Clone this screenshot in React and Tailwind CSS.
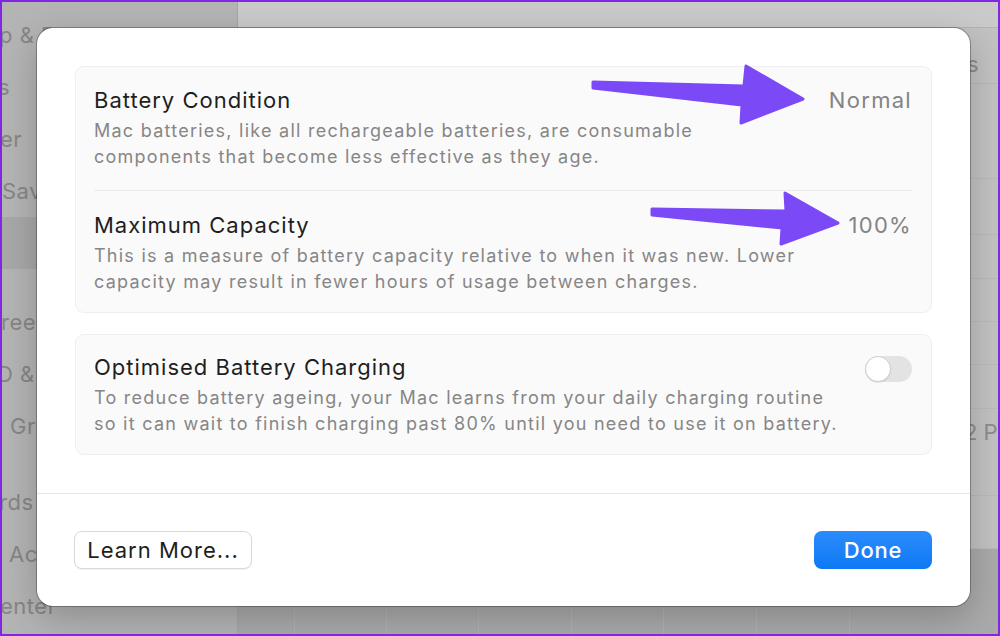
const font = { fontFamily: 'Inter, "Noto Sans", "Liberation Sans", sans-serif' }

const sidebarGroups = [
  [
    { text: 'p & D', ml: '-3px' },
    { text: 's', ml: '-4px' },
    { text: 'er', ml: '-2px' },
    { text: 'Sav', ml: '0px' },
    { text: 'Battery', ml: '40px', active: true },
  ],
  [
    { text: 'ree', ml: '-1px' },
    { text: 'D &', ml: '-5px' },
    { text: 'Gr', ml: '8px' },
  ],
  [
    { text: 'rds', ml: '-3px' },
    { text: 'Ac', ml: '7px' },
    { text: 'enter', ml: '-2px' },
  ],
]

const bars = [
  { left: 122, top: 14, h: 8 },
  { left: 153, top: -8, h: 30 },
  { left: 215, top: 16, h: 6 },
  { left: 309, top: 5, h: 17 },
]

function Sidebar() {
  return (
    <div className="w-[236px] shrink-0 h-full bg-[#b4b4b4] border-r border-[#a6a6a6] overflow-hidden">
      <div className="pt-[7px]">
        {sidebarGroups.map((group, gi) => (
          <div key={gi} className={gi === 0 ? '' : gi === 1 ? 'mt-[27px]' : 'mt-[24px]'}>
            {group.map((item) => (
              <div
                key={item.text}
                className={`h-[52px] flex items-center text-[22px] tracking-[0.5px] whitespace-nowrap text-[#868686] ${
                  item.active ? 'bg-[#a8a8a8] mr-[22px]' : ''
                }`}
              >
                <span style={{ marginLeft: item.ml }}>{item.text}</span>
              </div>
            ))}
          </div>
        ))}
      </div>
    </div>
  )
}

function MainBehind() {
  return (
    <div className="flex-1 min-w-0 h-full flex flex-col bg-[#c2c2c2]">
      <div className="h-[26px] bg-[#cacaca] border-b border-[#b3b3b3]" />
      <div className="flex-1 flex flex-col">
        <div className="h-[56px] border-b border-[#b9b9b9] flex items-end pl-[729px] pb-[2px] text-[22px] text-[#8d8d8d]">
          s
        </div>
        <div className="h-[95px] border-b border-[#b9b9b9]" />
        <div className="h-[56px] border-b border-[#b9b9b9]" />
        <div className="h-[44px] border-b border-[#b9b9b9]" />
        <div className="h-[43px] border-b border-[#bababa]" />
        <div className="h-[43px] border-b border-[#bababa]" />
        <div className="h-[44px] border-b border-[#bababa]" />
        <div className="h-[44px] flex items-end text-[22px] text-[#8d8d8d] whitespace-nowrap pl-[717px] pb-[4px]">
          12 PM
        </div>
        <div className="h-[43px] border-b border-[#bababa]" />
        <div className="h-[53px] border-b border-[#bababa]" />
        <div className="flex-1 bg-[#aaaaaa] relative">
          <div className="h-full flex">
            <div className="w-[57px] border-r border-[#b2b2b2]" />
            <div className="w-[92px] border-r border-[#b2b2b2]" />
            <div className="w-[92px] border-r border-[#b2b2b2]" />
            <div className="w-[93px] border-r border-[#b2b2b2]" />
            <div className="w-[92px] border-r border-[#b2b2b2]" />
            <div className="w-[93px] border-r border-[#b2b2b2]" />
            <div className="w-[93px] border-r border-[#b2b2b2]" />
          </div>
          {bars.map((b, i) => (
            <div
              key={i}
              className="absolute w-[20px] rounded-t-[4px] bg-[#6b8cc6]"
              style={{ left: b.left, top: b.top, height: b.h }}
            />
          ))}
        </div>
      </div>
    </div>
  )
}

function Toggle() {
  return (
    <div className="relative w-[47px] h-[26px] rounded-full bg-[#e3e3e3] shrink-0">
      <div className="absolute left-0 top-0 w-[26px] h-[26px] rounded-full bg-white border border-[#cfcfcf] shadow-[0_1px_1px_rgba(0,0,0,0.08)]" />
    </div>
  )
}

function Row({ title, desc, value, className = '' }) {
  return (
    <div className={`flex justify-between pl-[18px] pr-[19px] ${className}`}>
      <div>
        <div className="text-[22px] leading-[26px] tracking-[1px] text-[#1e1e1e]">{title}</div>
        <div className="mt-[5px] text-[18px] leading-[26px] tracking-[1.25px] text-[#868686]">{desc}</div>
      </div>
      {value && (
        <div className="text-[22px] leading-[26px] tracking-[1.3px] text-[#848484]">{value}</div>
      )}
    </div>
  )
}

function Dialog() {
  return (
    <div className="absolute left-[35px] top-[26px] w-[933px] h-[578px] bg-white rounded-[16px] shadow-[0_0_0_1px_rgba(0,0,0,0.28),0_12px_36px_rgba(0,0,0,0.22)] flex flex-col">
      <div className="px-[38px] pt-[38px]">
        <div className="rounded-[9px] bg-[#fafafa] border border-[#efefef]">
          <Row
            className="pt-[20px] pb-[20px]"
            title="Battery Condition"
            value="Normal"
            desc={
              <>
                Mac batteries, like all rechargeable batteries, are consumable
                <br />
                components that become less effective as they age.
              </>
            }
          />
          <div className="mx-[18px] h-px bg-[#ececec]" />
          <Row
            className="pt-[21px] pb-[17px]"
            title="Maximum Capacity"
            value="100%"
            desc={
              <>
                This is a measure of battery capacity relative to when it was new. Lower
                <br />
                capacity may result in fewer hours of usage between charges.
              </>
            }
          />
        </div>
        <div className="mt-[21px] rounded-[9px] bg-[#fafafa] border border-[#efefef] flex justify-between pl-[18px] pr-[19px] pt-[19px] pb-[17px]">
          <div>
            <div className="text-[22px] leading-[26px] tracking-[1px] text-[#1e1e1e]">
              Optimised Battery Charging
            </div>
            <div className="mt-[5px] text-[18px] leading-[26px] tracking-[1.25px] text-[#868686]">
              To reduce battery ageing, your Mac learns from your daily charging routine
              <br />
              so it can wait to finish charging past 80% until you need to use it on battery.
            </div>
          </div>
          <div className="pt-[2px]">
            <Toggle />
          </div>
        </div>
      </div>
      <div className="mt-[38px] h-px bg-[#e6e6e6]" />
      <div className="flex-1 flex items-center justify-between pl-[37px] pr-[38px]">
        <button className="h-[38px] w-[178px] rounded-[8px] bg-white border border-[#d9d9d9] shadow-[0_1px_1px_rgba(0,0,0,0.06)] text-[22px] tracking-[1px] text-[#1e1e1e]">
          Learn More...
        </button>
        <button className="h-[38px] w-[118px] rounded-[8px] bg-gradient-to-b from-[#2a8cfc] to-[#0b79f4] text-[22px] tracking-[0.8px] font-medium text-white">
          Done
        </button>
      </div>
    </div>
  )
}

function Arrows() {
  return (
    <svg
      className="absolute left-[-2px] top-[-2px] pointer-events-none"
      width="1000"
      height="636"
      viewBox="0 0 1000 636"
    >
      <g fill="#7b4af6" stroke="#7b4af6" strokeWidth="3" strokeLinejoin="round">
        <polygon points="593,82 744,86 746,66 803,99 741,123 742,105 593,88" />
        <polygon points="652,209 786,211 785,193 838,223 781,244 782,228 652,215" />
      </g>
    </svg>
  )
}

export default function App() {
  return (
    <div
      className="w-[1000px] h-[636px] relative overflow-hidden border-2 border-[#8326e3] bg-[#c2c2c2]"
      style={font}
    >
      <div className="flex h-full">
        <Sidebar />
        <MainBehind />
      </div>
      <Dialog />
      <Arrows />
    </div>
  )
}
